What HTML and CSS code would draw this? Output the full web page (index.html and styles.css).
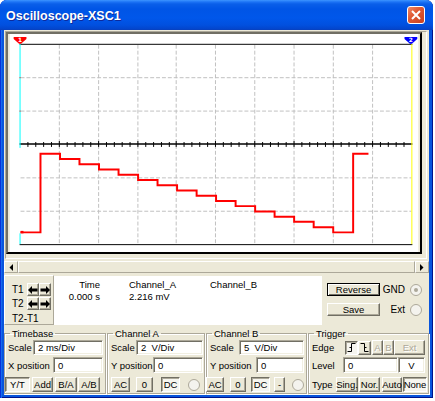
FILE: index.html
```html
<!DOCTYPE html>
<html lang="en">
<head>
  <meta charset="UTF-8" />
  <title>Oscilloscope-XSC1</title>
  <link rel="stylesheet" href="styles.css">
</head>
<body>

  <div class="window">
    <div class="titlebar">
      <span class="title">Oscilloscope-XSC1</span>
      <span class="close">
        <svg width="10" height="10" viewBox="0 0 10 10"><path d="M1 1 L9 9 M9 1 L1 9" stroke="#fff" stroke-width="2"/></svg>
      </span>
    </div>

    <div class="client">
      <div class="screen">
        <svg class="plot" width="416" height="222" viewBox="8 34 416 222">
          <rect x="8" y="34" width="416" height="222" fill="#fff"/>
          <g stroke="#c0c0c0" stroke-width="1" stroke-dasharray="4 2">
            <path d="M58.5 45 V248 M98.5 45 V248 M138.5 45 V248 M177.5 45 V248 M217.5 45 V248 M257.5 45 V248 M297.5 45 V248 M337.5 45 V248 M377.5 45 V248"/>
            <path d="M19 78.5 H417 M19 112.5 H417 M19 180.5 H417 M19 214.5 H417"/>
          </g>
          <path d="M18 44.5 H418 M18 248.5 H418" stroke="#000" stroke-width="1"/>
          <path d="M18 146 H418" stroke="#000" stroke-width="1.5"/>
          <path stroke="#000" stroke-width="1"
            d="M26.5 144 v5 M34.5 144 v5 M42.5 144 v5 M50.5 144 v5 M58.5 143 v6 M66.5 144 v5 M74.5 144 v5 M82.5 144 v5 M90.5 144 v5 M98.5 143 v6
               M106.5 144 v5 M114.5 144 v5 M122.5 144 v5 M130.5 144 v5 M138.5 143 v6 M146.5 144 v5 M154.5 144 v5 M162.5 144 v5 M170.5 144 v5 M177.5 143 v6
               M185.5 144 v5 M193.5 144 v5 M201.5 144 v5 M209.5 144 v5 M217.5 143 v6 M225.5 144 v5 M233.5 144 v5 M241.5 144 v5 M249.5 144 v5 M257.5 143 v6
               M265.5 144 v5 M273.5 144 v5 M281.5 144 v5 M289.5 144 v5 M297.5 143 v6 M305.5 144 v5 M313.5 144 v5 M321.5 144 v5 M329.5 144 v5 M337.5 143 v6
               M345.5 144 v5 M353.5 144 v5 M361.5 144 v5 M369.5 144 v5 M377.5 143 v6 M385.5 144 v5 M393.5 144 v5 M401.5 144 v5 M409.5 144 v5"/>
          <path d="M18.5 44 V150 M18.5 237 V248" stroke="#00ffff" stroke-width="1"/>
          <path d="M417.5 44 V248" stroke="#ffff00" stroke-width="1"/>
          <rect x="18" y="78" width="1" height="1" fill="#f00"/>
          <rect x="18" y="112" width="1" height="1" fill="#f00"/>
          <polyline fill="none" stroke="#f00" stroke-width="2"
            points="19,236 39.3,236 39.3,156 59.2,156 59.2,161.3 79,161.3 79,166.7 98.9,166.7 98.9,172 118.8,172 118.8,177.3 138.7,177.3 138.7,182.7 158.5,182.7 158.5,188 178.4,188 178.4,193.3 198.3,193.3 198.3,198.7 218.1,198.7 218.1,204 238,204 238,209.3 257.9,209.3 257.9,214.7 277.7,214.7 277.7,220 297.6,220 297.6,225.3 317.5,225.3 317.5,230.7 337.4,230.7 337.4,236 357.7,236 357.7,156 373.3,156"/>
          <rect x="19" y="234.5" width="3" height="2.5" fill="#f00"/>
          <polygon points="12,37 25,37 25,39 19.5,44 17.5,44 12,39" fill="#f00"/>
          <text x="18.5" y="42.5" class="mark">1</text>
          <polygon points="410,37 423,37 423,39 417.5,44 415.5,44 410,39" fill="#00f"/>
          <text x="416.5" y="42.5" class="mark">2</text>
        </svg>
      </div>

      <div class="hscroll">
        <span class="sb-btn">
          <svg width="4" height="7" viewBox="0 0 4 7"><path d="M4 0 V7 L0.5 3.5 Z" fill="#000"/></svg>
        </span>
        <span class="sb-thumb"></span>
        <span class="sb-btn">
          <svg width="4" height="7" viewBox="0 0 4 7"><path d="M0 0 V7 L3.5 3.5 Z" fill="#000"/></svg>
        </span>
      </div>

      <div class="readrow">
        <div class="cursors">
          <div class="cur-row">
            <span class="cur-label">T1</span>
            <span class="arrows">
              <span class="btn arrow"><svg width="10" height="8" viewBox="0 0 10 8"><path d="M0 4 L4 0 V2.5 H9.5 V5.5 H4 V8 Z" fill="#000"/></svg></span>
              <span class="btn arrow"><svg width="10" height="8" viewBox="0 0 10 8"><path d="M10 4 L6 0 V2.5 H0.5 V5.5 H6 V8 Z" fill="#000"/></svg></span>
            </span>
          </div>
          <div class="cur-row">
            <span class="cur-label">T2</span>
            <span class="arrows">
              <span class="btn arrow"><svg width="10" height="8" viewBox="0 0 10 8"><path d="M0 4 L4 0 V2.5 H9.5 V5.5 H4 V8 Z" fill="#000"/></svg></span>
              <span class="btn arrow"><svg width="10" height="8" viewBox="0 0 10 8"><path d="M10 4 L6 0 V2.5 H0.5 V5.5 H6 V8 Z" fill="#000"/></svg></span>
            </span>
          </div>
          <div class="cur-diff">T2-T1</div>
        </div>

        <div class="readout">
          <div class="rd-row">
            <span class="c-time">Time</span>
            <span class="c-a">Channel_A</span>
            <span class="c-b">Channel_B</span>
          </div>
          <div class="rd-row">
            <span class="c-time">0.000 s</span>
            <span class="c-a">2.216 mV</span>
          </div>
        </div>

        <div class="side">
          <span class="btn wide default">Reverse</span>
          <span class="side-label">GND</span>
          <span class="radio on"></span>
          <span class="btn wide">Save</span>
          <span class="side-label">Ext</span>
          <span class="radio"></span>
        </div>
      </div>

      <div class="groups">
        <fieldset class="group timebase">
          <legend>Timebase</legend>
          <div class="row r1">
            <span class="lbl w25">Scale</span>
            <span class="field w70">2 ms/Div</span>
          </div>
          <div class="row r2">
            <span class="lbl w45">X position</span>
            <span class="field w50">0</span>
          </div>
          <div class="row r3 tb-btns">
            <span class="btn pressed" style="width:25px">Y/T</span>
            <span class="btn" style="width:21px">Add</span>
            <span class="btn" style="width:22px">B/A</span>
            <span class="btn" style="width:22px">A/B</span>
          </div>
        </fieldset>

        <fieldset class="group chan-a">
          <legend>Channel A</legend>
          <div class="row r1">
            <span class="lbl w25">Scale</span>
            <span class="field w67">2&nbsp;&nbsp;V/Div</span>
          </div>
          <div class="row r2">
            <span class="lbl w42">Y position</span>
            <span class="field w50">0</span>
          </div>
          <div class="row r3 ch-btns">
            <span class="btn" style="width:19px">AC</span>
            <span class="btn" style="width:17px">0</span>
            <span class="btn pressed" style="width:19px">DC</span>
            <span class="radio"></span>
          </div>
        </fieldset>

        <fieldset class="group chan-b">
          <legend>Channel B</legend>
          <div class="row r1">
            <span class="lbl w29">Scale</span>
            <span class="field w65">5&nbsp;&nbsp;V/Div</span>
          </div>
          <div class="row r2">
            <span class="lbl w46">Y position</span>
            <span class="field w48">0</span>
          </div>
          <div class="row r3 ch-btns">
            <span class="btn" style="width:18px">AC</span>
            <span class="btn" style="width:16px">0</span>
            <span class="btn pressed" style="width:19px">DC</span>
            <span class="btn minus" style="width:11px">-</span>
            <span class="radio"></span>
          </div>
        </fieldset>

        <fieldset class="group trigger">
          <legend>Trigger</legend>
          <div class="row r1">
            <span class="lbl w33">Edge</span>
            <span class="btn pressed edge">
              <svg width="9" height="9" viewBox="0 0 9 9"><path d="M0.5 8.5 H4.5 V0.5 H8.5 M2.5 4.5 H4.5" fill="none" stroke="#000"/></svg>
            </span>
            <span class="btn edge">
              <svg width="9" height="9" viewBox="0 0 9 9"><path d="M0.5 0.5 H4.5 V8.5 H8.5 M4.5 4.5 H6.5" fill="none" stroke="#000"/></svg>
            </span>
            <span class="btn dis first" style="width:11px">A</span>
            <span class="btn dis" style="width:11px">B</span>
            <span class="btn dis" style="width:31px">Ext</span>
          </div>
          <div class="row r2">
            <span class="lbl w31">Level</span>
            <span class="field w55">0</span>
            <span class="field unit">V</span>
          </div>
          <div class="row r3 type-btns">
            <span class="lbl w24">Type</span>
            <span class="btn" style="width:22px">Sing.</span>
            <span class="btn" style="width:21px">Nor.</span>
            <span class="btn auto" style="width:20px">Auto</span>
            <span class="btn pressed" style="width:24px">None</span>
          </div>
        </fieldset>
      </div>
    </div>
  </div>

</body>
</html>
```

FILE: styles.css
```css
* {
  box-sizing: border-box;
}

body {
  margin: 0;
  background: #fff;
  font-family: "Liberation Sans", Arial, sans-serif;
  font-size: 9px;
  color: #000;
}

.window {
  width: 433px;
  height: 398px;
  padding: 0 4px 3px 4px;
  background: #0855dd;
  border-radius: 7px 7px 0 0;
  display: flex;
  flex-direction: column;
  box-shadow: inset 1px 0 #0831d9, inset 2px 0 #166aee, inset -1px 0 #00138c, inset 0 -1px #00138c;
}

.titlebar {
  height: 30px;
  margin: 0 -4px;
  padding: 2px 8px 0 6px;
  display: flex;
  align-items: center;
  justify-content: space-between;
  border-radius: 7px 7px 0 0;
  background: linear-gradient(to bottom, #3d95ff 0, #1c73f5 2px, #0a5fe9 4px, #0055e6 9px, #0057ea 18px, #0150df 25px, #0345cc 29px, #0a3fb8 30px);
}

.title {
  color: #fff;
  font-family: "Liberation Sans", Arial, sans-serif;
  font-weight: bold;
  font-size: 12.5px;
  text-shadow: 1px 1px #0c2a9c;
}

.close {
  width: 18px;
  height: 18px;
  margin-top: -2px;
  border: 1px solid #fff;
  border-radius: 3px;
  background: linear-gradient(135deg, #f08a68 0%, #e05a34 40%, #c8401e 100%);
  display: flex;
  align-items: center;
  justify-content: center;
}

.client {
  flex: 1;
  background: #ece9d8;
  display: flex;
  flex-direction: column;
}

/* scope screen */
.screen {
  margin: 1px 2px 0 1px;
  height: 228px;
  border: 1px solid;
  border-color: #aca899 #fff #fff #aca899;
}

.plot {
  display: block;
  border: 2px solid;
  border-color: #716f64 #000 #000 #716f64;
}

.mark {
  fill: #fff;
  font-family: "DejaVu Sans", sans-serif;
  font-size: 6px;
  font-weight: bold;
  text-anchor: middle;
}

/* scroll bar */
.hscroll {
  margin-top: 2px;
  height: 12px;
  display: flex;
  background: #f4f3ee;
}

.sb-btn {
  width: 14px;
  display: flex;
  align-items: center;
  justify-content: center;
  background: #ece9d8;
  border: 1px solid;
  border-color: #fff #aca899 #aca899 #fff;
}

.sb-thumb {
  flex: 1;
  background: #ece9d8;
  border: 1px solid;
  border-color: #fff #aca899 #aca899 #fff;
}

/* cursor + readout row */
.readrow {
  margin-top: 2px;
  height: 50px;
  display: flex;
}

.cursors {
  width: 50px;
  padding: 7px 0 0 7px;
  border: 1px solid;
  border-color: #fff #aca899 #aca899 #fff;
}

.cur-row {
  display: flex;
  align-items: center;
  height: 13px;
  margin-bottom: 1px;
}

.cur-label {
  width: 15px;
  font-size: 10px;
}

.arrows {
  display: flex;
}

.cur-diff {
  font-size: 10px;
  margin-top: 3px;
}

.readout {
  width: 268px;
  margin-top: 1px;
  background: #fff;
  padding-top: 2px;
  font-size: 9.5px;
}

.rd-row {
  display: flex;
  height: 12px;
  align-items: center;
}

.c-time {
  width: 46px;
  text-align: right;
}

.c-a {
  width: 81px;
  margin-left: 29px;
}

.side {
  flex: 1;
  padding: 8px 0 0 5px;
  display: grid;
  grid-template-columns: 53px 30px 12px;
  grid-template-rows: 13px 13px;
  row-gap: 7px;
  align-items: center;
}

.side-label {
  font-size: 10px;
  text-align: right;
  padding-right: 5px;
}

/* common controls */
.btn {
  height: 15px;
  display: inline-flex;
  align-items: center;
  justify-content: center;
  background: #ece9d8;
  border: 1px solid;
  border-color: #fff #716f64 #716f64 #fff;
  box-shadow: inset -1px -1px #aca899;
  font-size: 9.5px;
  white-space: nowrap;
  flex: none;
}

.btn.arrow {
  width: 12px;
  height: 13px;
}

.btn.wide {
  width: 53px;
  height: 13px;
  font-size: 9.5px;
}

.btn.default {
  border-color: #000;
  box-shadow: inset 1px 1px #fff, inset -1px -1px #716f64;
}

.btn.pressed {
  border-color: #716f64 #fff #fff #716f64;
  box-shadow: inset 1px 1px #aca899;
  background: #f6f5ef;
}

.btn.dis {
  color: #aca899;
  text-shadow: 1px 1px #fff;
}

.btn.edge {
  width: 13px;
  height: 14px;
}

.radio {
  width: 12px;
  height: 12px;
  flex: none;
  border-radius: 50%;
  border: 1px solid #aca899;
  background: #f4f3ee;
  display: inline-flex;
  align-items: center;
  justify-content: center;
}

.radio.on::after {
  content: "";
  width: 4px;
  height: 4px;
  border-radius: 50%;
  background: #aca899;
}

.field {
  height: 100%;
  flex: none;
  background: #fff;
  border: 1px solid;
  border-color: #aca899 #fff #fff #aca899;
  box-shadow: inset 1px 1px #716f64, inset -1px -1px #f1efe2;
  padding: 0 0 0 4px;
  display: inline-flex;
  align-items: center;
  font-size: 9.5px;
}

.field.unit {
  width: 27px;
  justify-content: center;
  padding: 0;
}

/* group boxes */
.groups {
  margin-top: 3px;
  display: flex;
  gap: 1px;
  height: 66px;
}

.group {
  margin: 0;
  padding: 0 1px 1px 3px;
  min-width: 0;
  flex: none;
  border: 1px solid #aca899;
  box-shadow: 1px 1px #fff, inset 1px 1px #fff;
}

.group legend {
  margin-left: 2px;
  padding: 0 2px;
  font-size: 9.5px;
  line-height: 11px;
}

.timebase { width: 102px; }
.chan-a { width: 98px; }
.chan-b { width: 101px; }
.trigger { width: 121px; }

.row {
  display: flex;
  align-items: center;
}

.r1 {
  height: 15px;
  margin-top: 1px;
}

.r2 {
  height: 16px;
  margin-top: 2px;
}

.r3 {
  height: 15px;
  margin-top: 4px;
}

.tb-btns {
  margin-left: -3px;
  gap: 2px;
}

.tb-btns .btn:last-child {
  margin-left: -1px;
}

.ch-btns .btn + .btn {
  margin-left: 6px;
}

.ch-btns .btn.pressed {
  margin-left: 8px;
}

.ch-btns .btn.minus {
  margin-left: 4px;
}

.ch-btns .radio {
  margin-left: 8px;
}

.chan-b .ch-btns {
  margin-left: -4px;
}

.chan-b .ch-btns .btn.pressed {
  margin-left: 5px;
}

.chan-b .ch-btns .radio {
  margin-left: 7px;
}

.trigger .btn.first {
  margin-left: 1px;
}

.type-btns .btn + .btn {
  margin-left: 1px;
}

.type-btns .btn.auto {
  margin-left: 2px;
}

.lbl {
  font-size: 9.5px;
  white-space: nowrap;
  flex: none;
}

.w24 { width: 24px; }
.w25 { width: 25px; }
.w29 { width: 29px; }
.w31 { width: 31px; }
.w33 { width: 33px; }
.w42 { width: 42px; }
.w45 { width: 45px; }
.w46 { width: 46px; }
.w48 { width: 48px; }
.w50 { width: 50px; }
.w55 { width: 55px; }
.w65 { width: 65px; }
.w67 { width: 67px; }
.w70 { width: 70px; }
```
